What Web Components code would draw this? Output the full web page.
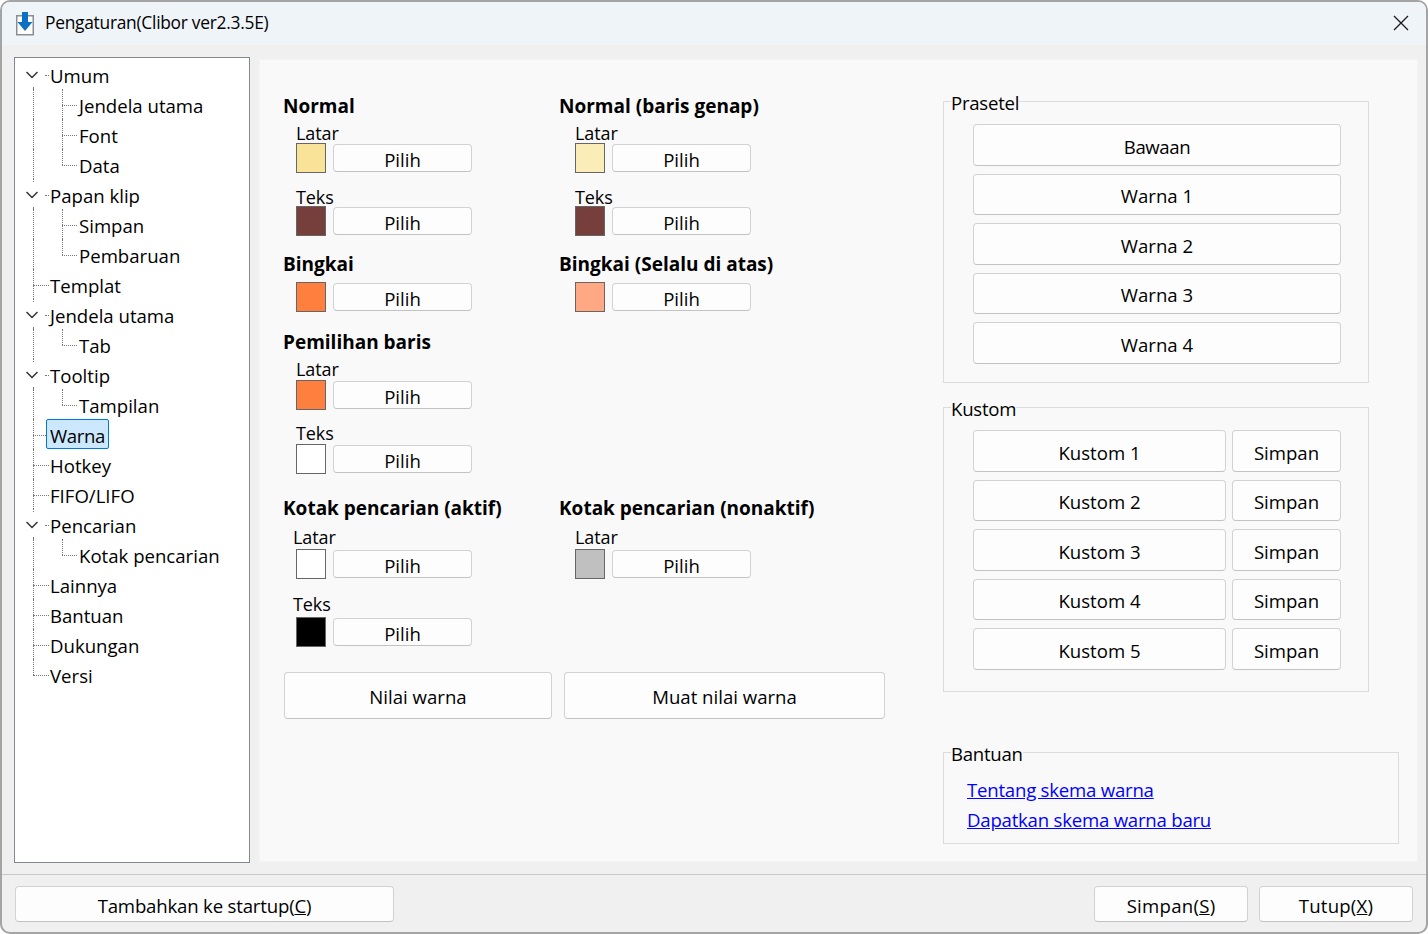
<!DOCTYPE html>
<html lang="id">
<head>
<meta charset="utf-8">
<title>Pengaturan(Clibor ver2.3.5E)</title>
<style>
  html, body { margin: 0; background: #fff; }
  body { font: 18.6px/20px "Open Sans", "Noto Sans", sans-serif; color: #000; }
</style>
</head>
<body>
<settings-window>
  <title-bar slot="title">Pengaturan(Clibor ver2.3.5E)</title-bar>

  <nav-tree slot="tree">
    <tree-item expander>Umum</tree-item>
    <tree-item level="1">Jendela utama</tree-item>
    <tree-item level="1">Font</tree-item>
    <tree-item level="1" last>Data</tree-item>
    <tree-item expander>Papan klip</tree-item>
    <tree-item level="1">Simpan</tree-item>
    <tree-item level="1" last>Pembaruan</tree-item>
    <tree-item>Templat</tree-item>
    <tree-item expander>Jendela utama</tree-item>
    <tree-item level="1" last>Tab</tree-item>
    <tree-item expander>Tooltip</tree-item>
    <tree-item level="1" last>Tampilan</tree-item>
    <tree-item selected>Warna</tree-item>
    <tree-item>Hotkey</tree-item>
    <tree-item>FIFO/LIFO</tree-item>
    <tree-item expander>Pencarian</tree-item>
    <tree-item level="1" last>Kotak pencarian</tree-item>
    <tree-item>Lainnya</tree-item>
    <tree-item>Bantuan</tree-item>
    <tree-item>Dukungan</tree-item>
    <tree-item last>Versi</tree-item>
  </nav-tree>

  <color-panel slot="colors">
    <color-section style="--section-top:36px" heading="Normal">
      <color-row label="Latar" color="#f8e399"></color-row>
      <color-row label="Teks" color="#763f3c" style="--top:14px;--gap:-1px"></color-row>
    </color-section>
    <color-section style="--section-top:36px;--indent:15px" heading="Normal (baris genap)">
      <color-row label="Latar" color="#fbedb7"></color-row>
      <color-row label="Teks" color="#763f3c" style="--top:14px;--gap:-1px"></color-row>
    </color-section>

    <color-section style="--section-top:18px" heading="Bingkai">
      <color-row color="#ff7f3f" style="--top:8px"></color-row>
    </color-section>
    <color-section style="--section-top:18px;--indent:15px" heading="Bingkai (Selalu di atas)">
      <color-row color="#ffa883" style="--top:8px"></color-row>
    </color-section>

    <color-section style="--section-top:20px" heading="Pemilihan baris">
      <color-row label="Latar" color="#ff7f3f" style="--gap:1px"></color-row>
      <color-row label="Teks" color="#ffffff" style="--top:13px;--gap:1px"></color-row>
    </color-section>
    <div></div>

    <color-section style="--section-top:24px" heading="Kotak pencarian (aktif)">
      <color-row label="Latar" color="#ffffff" label-x="-3px" style="--top:9px;--gap:2px"></color-row>
      <color-row label="Teks" color="#000000" label-x="-3px" style="--top:15px;--gap:3px"></color-row>
    </color-section>
    <color-section style="--section-top:24px;--indent:15px" heading="Kotak pencarian (nonaktif)">
      <color-row label="Latar" color="#c0c0c0" style="--top:9px;--gap:2px"></color-row>
    </color-section>

    <action-row>
      <push-button style="width:268px;height:47px;--nudge:3px">Nilai warna</push-button>
      <push-button style="width:321px;height:47px;--nudge:3px">Muat nilai warna</push-button>
    </action-row>
  </color-panel>

  <side-panel slot="side">
    <group-box title="Prasetel" style="--pad:12px 27px 18px 29px">
      <button-stack>
        <push-button style="height:42px;letter-spacing:-0.4px">Bawaan</push-button>
        <push-button style="height:41px;--nudge:3px">Warna 1</push-button>
        <push-button style="height:42px">Warna 2</push-button>
        <push-button style="height:41px;--nudge:3px">Warna 3</push-button>
        <push-button style="height:42px">Warna 4</push-button>
      </button-stack>
    </group-box>
    <group-box title="Kustom" style="margin-top:13px;--pad:12px 27px 21px 29px">
      <button-stack columns>
        <push-button style="height:42px">Kustom 1</push-button><push-button style="height:42px">Simpan</push-button>
        <push-button style="height:41px;--nudge:3px">Kustom 2</push-button><push-button style="height:41px;--nudge:3px">Simpan</push-button>
        <push-button style="height:42px">Kustom 3</push-button><push-button style="height:42px">Simpan</push-button>
        <push-button style="height:41px;--nudge:3px">Kustom 4</push-button><push-button style="height:41px;--nudge:3px">Simpan</push-button>
        <push-button style="height:42px">Kustom 5</push-button><push-button style="height:42px">Simpan</push-button>
      </button-stack>
    </group-box>
    <group-box title="Bantuan" style="margin-top:49px;width:456px;--pad:12px 16px 8px 23px">
      <help-link>Tentang skema warna</help-link>
      <help-link>Dapatkan skema warna baru</help-link>
    </group-box>
  </side-panel>

  <push-button slot="footer" style="width:379px;height:36px;letter-spacing:-0.18px">Tambahkan ke startup(<u>C</u>)</push-button>
  <push-button slot="footer" style="width:154px;height:36px;margin-left:auto;letter-spacing:0.26px">Simpan(<u>S</u>)</push-button>
  <push-button slot="footer" style="width:154px;height:36px;margin-left:11px;letter-spacing:0.2px">Tutup(<u>X</u>)</push-button>
</settings-window>

<script>
class SettingsWindow extends HTMLElement{
    constructor(){
        super();
        this.attachShadow({ mode : "open" });
    }
    static get styles(){
        return `
            :host{
                display: flex;
                flex-direction: column;
                box-sizing: border-box;
                width: 1428px;
                height: 934px;
                background: #f0f0f0;
                border: 2px solid #a4a4a4;
                border-radius: 10px;
                overflow: hidden;
            }
            .main{
                display: flex;
                flex: 1;
                min-height: 0;
                padding: 12px 8px 11px 12px;
                gap: 9px;
            }
            .panel{
                display: flex;
                flex: 1;
                padding-left: 24px;
                background: #f9f9f9;
                border: 1px solid #f4f4f4;
                margin-top: 2px;
                margin-bottom: 1px;
            }
            .footer{
                display: flex;
                padding: 11px 13px 0;
                height: 46px;
                border-top: 1px solid #c8c8c8;
            }
        `
    }
    connectedCallback(){
        this.shadowRoot.innerHTML = `
        <style>${SettingsWindow.styles}</style>
        <slot name="title"></slot>
        <div class="main">
            <slot name="tree"></slot>
            <div class="panel">
                <slot name="colors"></slot>
                <slot name="side"></slot>
            </div>
        </div>
        <div class="footer"><slot name="footer"></slot></div>
        `
    }
}

class TitleBar extends HTMLElement{
    constructor(){
        super();
        this.attachShadow({ mode : "open" });
    }
    connectedCallback(){
        this.shadowRoot.innerHTML = `
        <style>
            :host{
                display: flex;
                align-items: center;
                height: 43px;
                padding: 0 17px 0 14px;
                background: #eff4f9;
                font-size: 17.4px;
                letter-spacing: -0.28px;
            }
            .text{ margin: 0 0 4px 11px; flex: 1; }
            .icon{ margin-top: 1px; }
        </style>
        <svg class="icon" width="18" height="24" viewBox="0 0 18 24">
            <path d="M0.75 3.75H17.25V22.75H0.75Z" fill="#fdfdfd" stroke="#8a8e92" stroke-width="1.5"/>
            <path d="M6 0H12V10H16.5L9 19L1.5 10H6Z" fill="#0b6fc4"/>
        </svg>
        <span class="text"><slot></slot></span>
        <svg width="16" height="16" viewBox="0 0 16 16" style="margin-bottom:2px">
            <path d="M1 1L15 15M15 1L1 15" fill="none" stroke="#1a1a1a" stroke-width="1.3"/>
        </svg>
        `
    }
}

class NavTree extends HTMLElement{
    constructor(){
        super();
        this.attachShadow({ mode : "open" });
    }
    connectedCallback(){
        this.shadowRoot.innerHTML = `
        <style>
            :host{
                display: block;
                box-sizing: border-box;
                width: 236px;
                padding-top: 1px;
                background: #fff;
                border: 1px solid #828790;
            }
        </style>
        <slot></slot>
        `
    }
}

class TreeItem extends HTMLElement{
    constructor(){
        super();
        this.attachShadow({ mode : "open" });
    }
    static get styles(){
        return `
            :host{
                display: block;
                position: relative;
                height: 30px;
            }
            .label{
                position: absolute;
                top: 0;
                left: 35px;
                height: 28px;
                line-height: 34px;
                white-space: nowrap;
            }
            :host([level="1"]) .label{ left: 64px; }
            :host([selected]) .label{
                left: 31px;
                padding: 0 3px 0 3px;
                height: 28px;
                background: #cce8ff;
                border: 1px solid #0078d7;
                border-radius: 2px;
                line-height: 32px;
                letter-spacing: -0.35px;
            }
            i{ position: absolute; display: block; }
            .v{ width: 0; border-left: 1px dotted #777; }
            .h{ height: 0; border-top: 1px dotted #777; top: 16px; }
            svg{ position: absolute; left: 11px; top: 12px; }
        `
    }
    connectedCallback(){
        const level = this.getAttribute("level");
        const last = this.hasAttribute("last");
        const expander = this.hasAttribute("expander");
        const first = !this.previousElementSibling;
        let guides = "";
        if(level === "1"){
            // the child's own elbow and the parent's line that keeps running past it
            guides += `<i class="v" style="left:18px;top:0;height:30px"></i>`;
            guides += `<i class="v" style="left:47px;top:0;height:${last ? 16 : 30}px"></i>`;
            guides += `<i class="h" style="left:47px;width:15px"></i>`;
        }else if(expander){
            if(!first) guides += `<i class="v" style="left:18px;top:0;height:3px"></i>`;
            guides += `<i class="v" style="left:18px;top:28px;height:2px"></i>`;
            guides += `<i class="h" style="left:30px;width:4px"></i>`;
        }else{
            guides += `<i class="v" style="left:18px;top:0;height:${last ? 16 : 30}px"></i>`;
            guides += `<i class="h" style="left:18px;width:${this.hasAttribute("selected") ? 13 : 16}px"></i>`;
        }
        this.shadowRoot.innerHTML = `
        <style>${TreeItem.styles}</style>
        ${guides}
        ${expander ? `<svg width="12" height="8" viewBox="0 0 12 8"><path d="M0.5 1L6 6.5L11.5 1" fill="none" stroke="#333" stroke-width="1.5"/></svg>` : ""}
        <span class="label"><slot></slot></span>
        `
    }
}

class ColorPanel extends HTMLElement{
    constructor(){
        super();
        this.attachShadow({ mode : "open" });
    }
    connectedCallback(){
        this.shadowRoot.innerHTML = `
        <style>
            :host{
                display: grid;
                grid-template-columns: 276px 325px;
                grid-auto-rows: min-content;
                align-content: start;
                width: 601px;
            }
        </style>
        <slot></slot>
        `
    }
}

class ColorSection extends HTMLElement{
    constructor(){
        super();
        this.attachShadow({ mode : "open" });
    }
    connectedCallback(){
        this.shadowRoot.innerHTML = `
        <style>
            :host{
                display: block;
                margin-top: var(--section-top, 0);
            }
            h3{
                margin: 0 0 0 -1px;
                font-size: 19px;
                font-weight: 700;
                line-height: 20px;
            }
            .rows{ padding-left: var(--indent, 12px); }
        </style>
        <h3>${this.getAttribute("heading")}</h3>
        <div class="rows"><slot></slot></div>
        `
    }
}

class ColorRow extends HTMLElement{
    constructor(){
        super();
        this.attachShadow({ mode : "open" });
    }
    connectedCallback(){
        const label = this.getAttribute("label");
        const labelX = this.getAttribute("label-x") || "0";
        this.shadowRoot.innerHTML = `
        <style>
            :host{
                display: block;
                margin-top: var(--top, 7px);
            }
            .label{
                height: 20px;
                line-height: 20px;
                font-size: 18px;
                letter-spacing: -0.1px;
                margin: 0 0 var(--gap, 0) ${labelX};
            }
            .row{
                display: flex;
                align-items: center;
                gap: 7px;
            }
            .swatch{
                box-sizing: border-box;
                width: 30px;
                height: 30px;
                background: ${this.getAttribute("color")};
                border: 1px solid #666;
            }
            push-button{ width: 139px; height: 28px; }
        </style>
        ${label ? `<div class="label">${label}</div>` : ""}
        <div class="row">
            <div class="swatch"></div>
            <push-button>Pilih</push-button>
        </div>
        `
    }
}

class ActionRow extends HTMLElement{
    constructor(){
        super();
        this.attachShadow({ mode : "open" });
    }
    connectedCallback(){
        this.shadowRoot.innerHTML = `
        <style>
            :host{
                grid-column: 1 / -1;
                display: flex;
                gap: 12px;
                margin-top: 25px;
            }
        </style>
        <slot></slot>
        `
    }
}

class PushButton extends HTMLElement{
    constructor(){
        super();
        this.attachShadow({ mode : "open" });
    }
    connectedCallback(){
        this.shadowRoot.innerHTML = `
        <style>
            :host{
                display: flex;
                align-items: center;
                justify-content: center;
                box-sizing: border-box;
                padding-top: var(--nudge, 4px);
                background: #fdfdfd;
                border: 1px solid #d2d2d2;
                border-bottom-color: #c2c2c2;
                border-radius: 4px;
                white-space: pre;
            }
            span{ display: block; line-height: 20px; }
        </style>
        <span><slot></slot></span>
        `
    }
}

class SidePanel extends HTMLElement{
    constructor(){
        super();
        this.attachShadow({ mode : "open" });
    }
    connectedCallback(){
        this.shadowRoot.innerHTML = `
        <style>
            :host{
                display: block;
                width: 426px;
                margin-left: 58px;
                padding-top: 30px;
            }
        </style>
        <slot></slot>
        `
    }
}

class GroupBox extends HTMLElement{
    constructor(){
        super();
        this.attachShadow({ mode : "open" });
    }
    connectedCallback(){
        this.shadowRoot.innerHTML = `
        <style>
            :host{ display: block; }
            fieldset{
                margin: 0;
                padding: 0;
                border: 1px solid #dcdcdc;
                min-width: 0;
            }
            legend{
                margin-left: 7px;
                padding: 0;
                height: 22px;
                line-height: 25px;
                letter-spacing: -0.25px;
            }
            .content{ padding: var(--pad, 10px); }
        </style>
        <fieldset>
            <legend>${this.getAttribute("title")}</legend>
            <div class="content"><slot></slot></div>
        </fieldset>
        `
    }
}

class ButtonStack extends HTMLElement{
    constructor(){
        super();
        this.attachShadow({ mode : "open" });
    }
    connectedCallback(){
        this.shadowRoot.innerHTML = `
        <style>
            :host{
                display: grid;
                row-gap: 8px;
            }
            :host([columns]){
                grid-template-columns: 253px 109px;
                column-gap: 6px;
            }
        </style>
        <slot></slot>
        `
    }
}

class HelpLink extends HTMLElement{
    constructor(){
        super();
        this.attachShadow({ mode : "open" });
    }
    connectedCallback(){
        this.shadowRoot.innerHTML = `
        <style>
            :host{
                display: block;
                height: 30px;
                line-height: 30px;
                color: #0000ff;
                text-decoration: underline;
                letter-spacing: -0.22px;
            }
        </style>
        <slot></slot>
        `
    }
}

customElements.define("settings-window", SettingsWindow)
customElements.define("title-bar", TitleBar)
customElements.define("nav-tree", NavTree)
customElements.define("tree-item", TreeItem)
customElements.define("color-panel", ColorPanel)
customElements.define("color-section", ColorSection)
customElements.define("color-row", ColorRow)
customElements.define("action-row", ActionRow)
customElements.define("push-button", PushButton)
customElements.define("side-panel", SidePanel)
customElements.define("group-box", GroupBox)
customElements.define("button-stack", ButtonStack)
customElements.define("help-link", HelpLink)
</script>
</body>
</html>
